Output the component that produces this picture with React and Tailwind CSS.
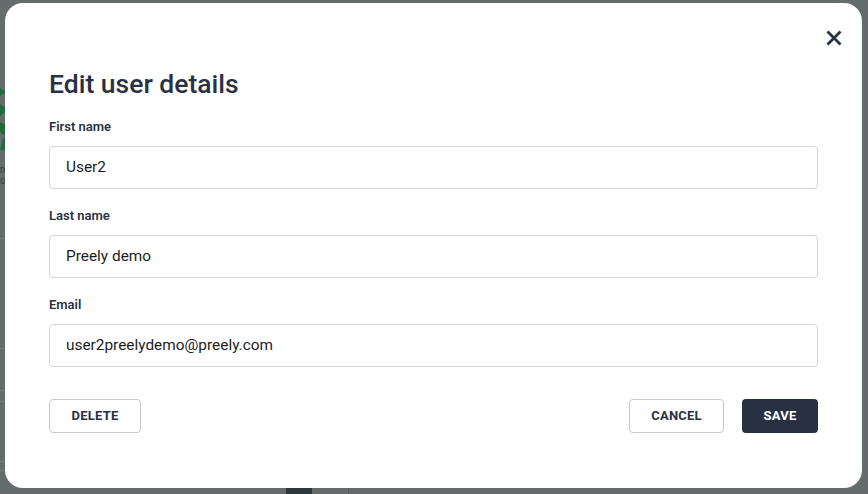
import React from "react";

function Field({ label, value }) {
  return (
    <div className="flex flex-col">
      <label className="text-[13px] leading-4 font-semibold text-[#2a3142]">{label}</label>
      <div className="mt-[11px] h-[43px] rounded-[4px] border border-[#d6d6d6] flex items-center px-4 text-[15.4px] text-[#1d1d1f]">
        {value}
      </div>
    </div>
  );
}

export default function App() {
  return (
    <div
      className="relative w-[868px] h-[494px] overflow-hidden bg-[#646c6c]"
      style={{ fontFamily: "Roboto, 'Noto Sans', sans-serif" }}
    >
      {/* underlying page, dimmed */}
      <div className="flex flex-col w-[20px] pt-[84px]">
        <svg width="10" height="66" viewBox="0 0 10 66" className="block">
          <path d="M0 4 L6 8 L0 12 Z M0 20 L8 26 L0 32 Z M0 38 L9 42 L5 52 L0 48 Z" fill="#1f6b3a" />
          <path d="M4 52 L9 66 L0 66 Z" fill="#1f6b3a" />
        </svg>
        <div className="mt-[14px] text-[10px] leading-[11px] text-[#3a3f40]">re<br />o</div>
        <div className="mt-[52px] h-px bg-[#757c7c]" />
        <div className="mt-[109px] h-px bg-[#757c7c]" />
        <div className="mt-[41px] h-px bg-[#757c7c]" />
        <div className="mt-[10px] h-px bg-[#757c7c]" />
        <div className="mt-[59px] h-px bg-[#757c7c]" />
        <div className="mt-[8px] h-px bg-[#757c7c]" />
      </div>

      {/* modal */}
      <div className="absolute left-[5px] top-[3px] w-[857px] h-[485px] bg-white rounded-[18px] px-[44px] pt-[65px]">
        <button className="absolute right-[20px] top-[27px] w-[16px] h-[16px] flex items-center justify-center">
          <svg width="16" height="16" viewBox="0 0 16 16">
            <path d="M1.5 1.5 L14.5 14.5 M14.5 1.5 L1.5 14.5" stroke="#2a3142" strokeWidth="2.8" strokeLinecap="butt" />
          </svg>
        </button>
        <h2 className="text-[26.5px] leading-8 font-medium text-[#2a3142]">Edit user details</h2>
        <div className="mt-[19px] flex flex-col gap-[19px]">
          <Field label="First name" value="User2" />
          <Field label="Last name" value="Preely demo" />
          <Field label="Email" value="user2preelydemo@preely.com" />
        </div>
        <div className="mt-[32px] flex items-center">
          <button className="h-[34px] w-[92px] rounded-[4px] border border-[#c9c9c9] text-[13px] font-bold text-[#2a3142] tracking-[0.2px]">
            DELETE
          </button>
          <div className="ml-auto flex gap-[18px]">
            <button className="h-[34px] w-[95px] rounded-[4px] border border-[#c9c9c9] text-[13px] font-bold text-[#2a3142] tracking-[0.2px]">
              CANCEL
            </button>
            <button className="h-[34px] w-[76px] rounded-[4px] bg-[#283142] text-[13px] font-bold text-white tracking-[0.2px]">
              SAVE
            </button>
          </div>
        </div>
      </div>

      <div className="absolute left-[286px] top-[488px] w-[26px] h-[6px] bg-[#2c3a3c]" />
      <div className="absolute left-[348px] top-[488px] w-px h-[6px] bg-[#565d5d]" />
    </div>
  );
}
